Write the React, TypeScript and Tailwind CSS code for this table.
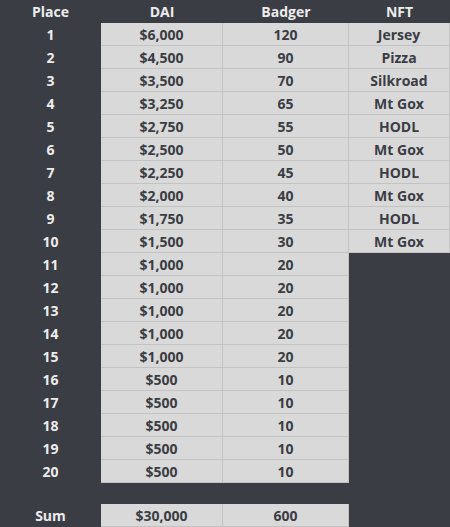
const prizes: [number, string, string, string?][] = [
  [1, '$6,000', '120', 'Jersey'],
  [2, '$4,500', '90', 'Pizza'],
  [3, '$3,500', '70', 'Silkroad'],
  [4, '$3,250', '65', 'Mt Gox'],
  [5, '$2,750', '55', 'HODL'],
  [6, '$2,500', '50', 'Mt Gox'],
  [7, '$2,250', '45', 'HODL'],
  [8, '$2,000', '40', 'Mt Gox'],
  [9, '$1,750', '35', 'HODL'],
  [10, '$1,500', '30', 'Mt Gox'],
  [11, '$1,000', '20'],
  [12, '$1,000', '20'],
  [13, '$1,000', '20'],
  [14, '$1,000', '20'],
  [15, '$1,000', '20'],
  [16, '$500', '10'],
  [17, '$500', '10'],
  [18, '$500', '10'],
  [19, '$500', '10'],
  [20, '$500', '10'],
];

const cell = 'flex items-center justify-center bg-[#d9d9d9] text-[#3b3d44] border-b border-r border-[#c3c3c3]';
const label = 'flex items-center justify-center text-[#ececec]';

export default function App() {
  return (
    <div
      className="w-[450px] h-[527px] overflow-hidden bg-[#3b3d44] text-[14px] font-bold"
      style={{ fontFamily: '"Open Sans", "Noto Sans", sans-serif' }}
    >
      <div className="grid grid-cols-[101px_122px_126px_101px] auto-rows-[23px]">
        <div className={label}>Place</div>
        <div className={label}>DAI</div>
        <div className={label}>Badger</div>
        <div className={label}>NFT</div>
        {prizes.map(([place, dai, badger, nft]) => (
          <Row key={place} place={place} dai={dai} badger={badger} nft={nft} />
        ))}
      </div>
      <div className="grid grid-cols-[101px_122px_126px_101px] h-[23px] mt-[21px]">
        <div className={label}>Sum</div>
        <div className={cell}>$30,000</div>
        <div className={cell}>600</div>
        <div />
      </div>
    </div>
  );
}

function Row({ place, dai, badger, nft }: { place: number; dai: string; badger: string; nft?: string }) {
  return (
    <>
      <div className={label}>{place}</div>
      <div className={cell}>{dai}</div>
      <div className={cell}>{badger}</div>
      {nft ? <div className={cell}>{nft}</div> : <div />}
    </>
  );
}
